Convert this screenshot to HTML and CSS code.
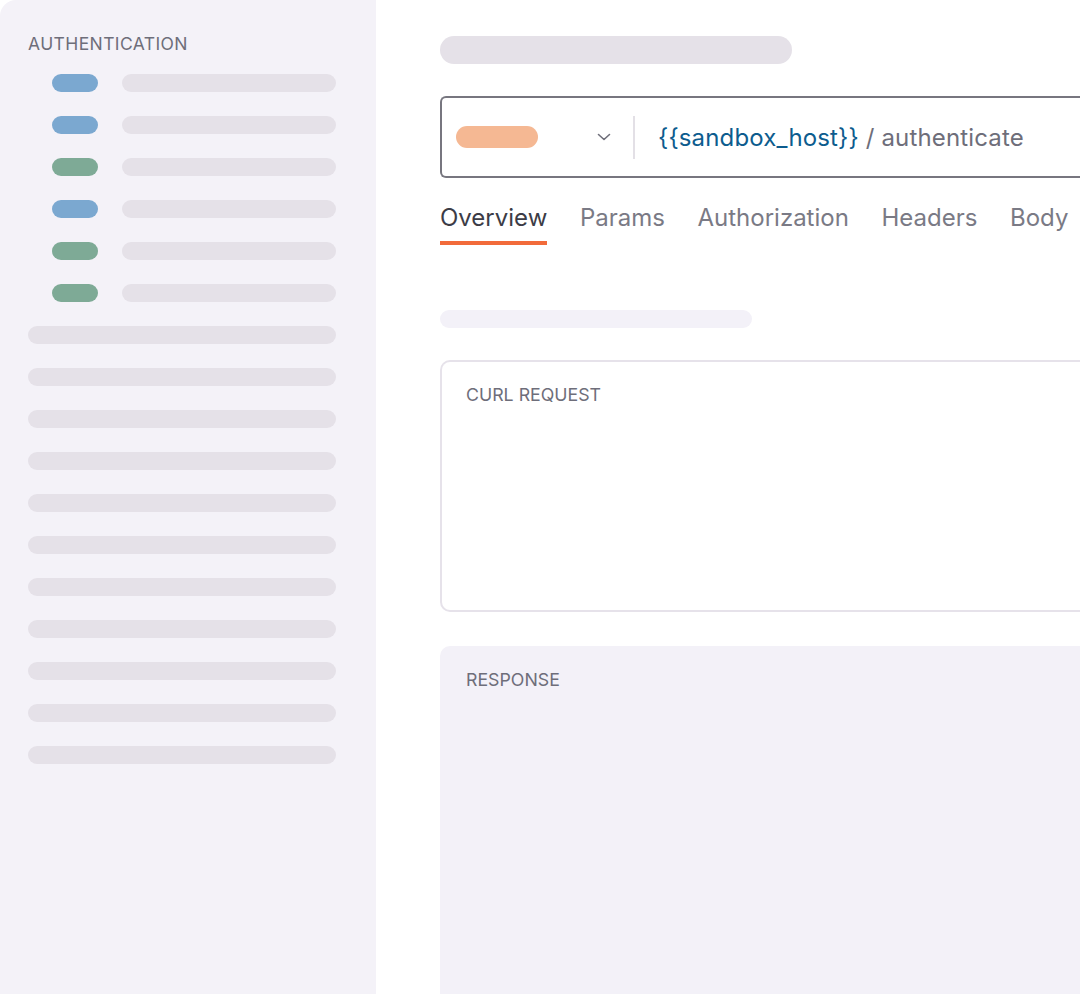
FILE: index.html
```html
<!DOCTYPE html>
<html lang="en">
<head>
  <meta charset="UTF-8">
  <title>Authenticate</title>
  <link rel="stylesheet" href="styles.css">
</head>
<body>
<div class="app">
  <div class="sidebar">
    <div class="side-title">AUTHENTICATION</div>
    <div class="side-list">
      <div class="req"><span class="method blue"></span><span class="line"></span></div>
      <div class="req"><span class="method blue"></span><span class="line"></span></div>
      <div class="req"><span class="method green"></span><span class="line"></span></div>
      <div class="req"><span class="method blue"></span><span class="line"></span></div>
      <div class="req"><span class="method green"></span><span class="line"></span></div>
      <div class="req"><span class="method green"></span><span class="line"></span></div>
      <div class="folder"></div>
      <div class="folder"></div>
      <div class="folder"></div>
      <div class="folder"></div>
      <div class="folder"></div>
      <div class="folder"></div>
      <div class="folder"></div>
      <div class="folder"></div>
      <div class="folder"></div>
      <div class="folder"></div>
      <div class="folder"></div>
    </div>
  </div>

  <div class="main">
    <div class="page-title"></div>

    <div class="url-box">
      <span class="verb"></span>
      <svg class="chevron" width="14" height="8" viewBox="0 0 14 8">
        <path d="M1.5 1.5 L7 6.5 L12.5 1.5" fill="none" stroke="#6f6f7a" stroke-width="1.6" stroke-linecap="round" stroke-linejoin="round"/>
      </svg>
      <span class="divider"></span>
      <span class="url"><span class="var">{{sandbox_host}}</span> / authenticate</span>
    </div>

    <div class="tabs">
      <div class="tab active">Overview</div>
      <div class="tab">Params</div>
      <div class="tab">Authorization</div>
      <div class="tab">Headers</div>
      <div class="tab">Body</div>
    </div>

    <div class="desc"></div>

    <div class="panel curl">
      <div class="panel-label">CURL REQUEST</div>
    </div>

    <div class="panel response">
      <div class="panel-label">RESPONSE</div>
    </div>
  </div>
</div>
</body>
</html>
```

FILE: styles.css
```css
body {
  margin: 0;
  overflow: hidden;
  background: #fff;
  font-family: Inter, "Noto Sans", sans-serif;
}

.app {
  display: flex;
  width: 1240px;
  height: 994px;
  border-top-left-radius: 16px;
  overflow: hidden;
  background: #fff;
}

/* left column */
.sidebar {
  width: 308px;
  flex-shrink: 0;
  background: #f4f2f8;
  padding: 34px 40px 0 28px;
}

.side-title {
  font-size: 17.5px;
  line-height: 20px;
  color: #6e6e7a;
  letter-spacing: 0.4px;
  margin-bottom: 20px;
}

.side-list {
  display: flex;
  flex-direction: column;
  gap: 24px;
}

.req {
  display: flex;
  gap: 24px;
  padding-left: 24px;
}

.method {
  width: 46px;
  height: 18px;
  border-radius: 9px;
  flex-shrink: 0;
}
.method.blue { background: #7ba8d0; }
.method.green { background: #7eaa96; }

.line {
  flex: 1;
  height: 18px;
  border-radius: 9px;
  background: #e5e1e8;
}

.folder {
  height: 18px;
  border-radius: 9px;
  background: #e5e1e8;
}

/* right column */
.main {
  flex: 1;
  padding: 36px 0 0 64px;
}

.page-title {
  width: 352px;
  height: 28px;
  border-radius: 14px;
  background: #e5e1e8;
  margin-bottom: 32px;
}

.url-box {
  display: flex;
  align-items: center;
  height: 78px;
  border: 2px solid #77767f;
  border-right: none;
  border-radius: 6px 0 0 6px;
  padding-left: 14px;
}

.verb {
  width: 82px;
  height: 22px;
  border-radius: 11px;
  background: #f5b893;
}

.chevron {
  margin-left: 59px;
}

.divider {
  width: 2px;
  height: 43px;
  background: #e3e0e6;
  margin-left: 22px;
}

.url {
  margin-left: 23px;
  font-size: 24px;
  letter-spacing: 0.15px;
  color: #6e6e7a;
}
.url .var { color: #0d5c8e; }

.tabs {
  display: flex;
  gap: 32.6px;
  margin-top: 26px;
}

.tab {
  font-size: 24px;
  line-height: 28px;
  color: #7a7a85;
  padding-bottom: 9px;
  border-bottom: 4px solid transparent;
}
.tab.active {
  color: #3c3c46;
  border-bottom-color: #f26b3a;
}

.desc {
  width: 312px;
  height: 18px;
  border-radius: 9px;
  background: #f3f1f8;
  margin-top: 65px;
}

.panel {
  border-radius: 10px 0 0 10px;
  padding: 23px 24px 24px;
}

.panel-label {
  font-size: 17.75px;
  line-height: 20px;
  color: #6e6e7a;
}

.curl {
  margin-top: 32px;
  height: 201px;
  border: 2px solid #e6e2ea;
  border-right: none;
}

.response {
  margin-top: 34px;
  height: 400px;
  background: #f3f1f8;
  padding-top: 24px;
  padding-left: 26px;
}
```
